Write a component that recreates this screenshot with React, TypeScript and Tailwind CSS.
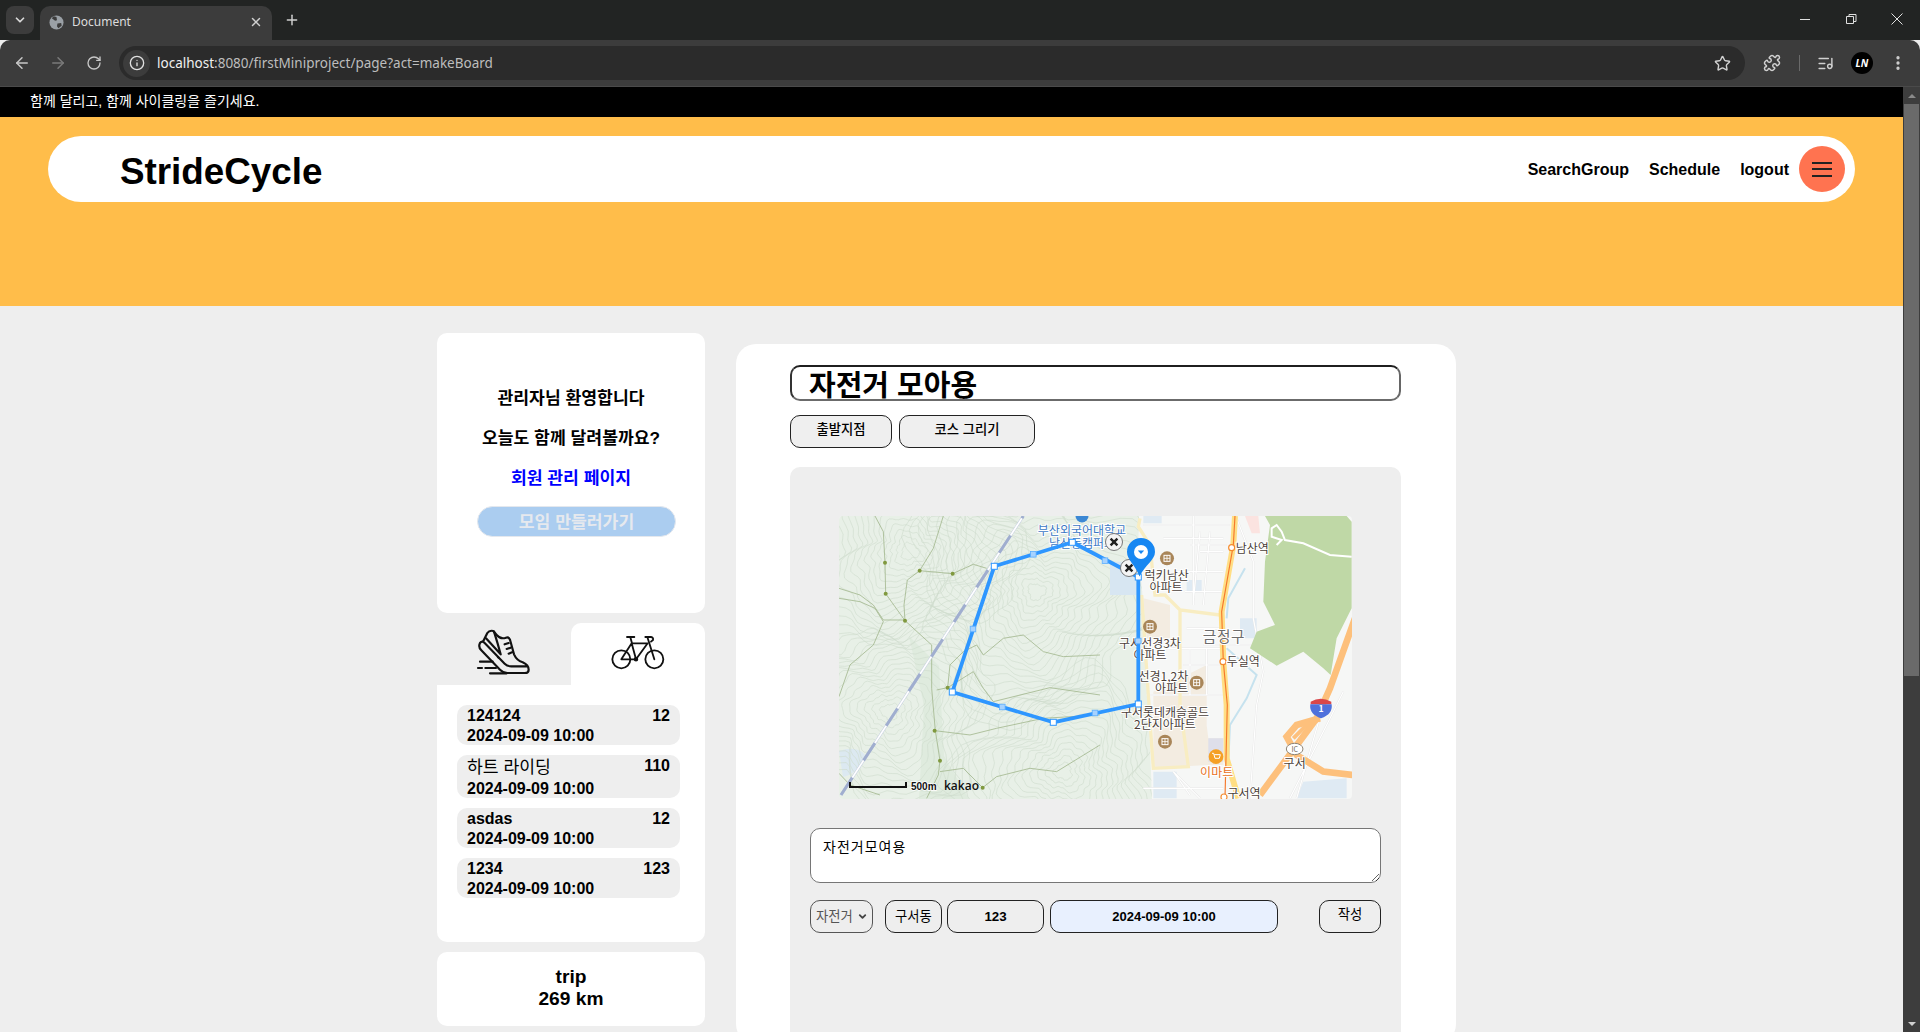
import { ArrowLeft, ArrowRight, ChevronDown, Info, ListMusic, MoreVertical, Plus, Puzzle, RotateCw, Star, X } from "lucide-react";

const sans = "font-['Liberation_Sans','Noto_Sans_CJK_KR',sans-serif]";

const boards = [
  { title: "124124", count: "12", date: "2024-09-09 10:00" },
  { title: "하트 라이딩", count: "110", date: "2024-09-09 10:00", kr: true },
  { title: "asdas", count: "12", date: "2024-09-09 10:00" },
  { title: "1234", count: "123", date: "2024-09-09 10:00" },
];

// contour rings for the terrain side of the map
function ring(cx: number, cy: number, r: number, seed: number) {
  const pts: string[] = [];
  for (let i = 0; i <= 90; i++) {
    const t = (i / 90) * Math.PI * 2;
    const k = 1 + 0.16 * Math.sin(3 * t + seed) + 0.08 * Math.sin(7 * t + seed * 2 + r / 40) + 0.035 * Math.sin(17 * t + r / 15);
    pts.push(`${(cx + Math.cos(t) * r * k * 1.1).toFixed(1)},${(cy + Math.sin(t) * r * k).toFixed(1)}`);
  }
  return `M${pts.join("L")}Z`;
}

const contourCenters = [
  { x: 240, y: 140, seed: 1, n: 16 },
  { x: 620, y: 260, seed: 2.4, n: 20 },
  { x: 180, y: 620, seed: 4, n: 16 },
  { x: 700, y: 800, seed: 5.2, n: 16 },
];

const trailDots = [
  [165, 173], [167, 266], [225, 347], [269, 197], [368, 206], [353, 548], [314, 677], [330, 767], [458, 848],
];

const routeCorners = [
  [113.3, 176], [155.3, 50.3], [233.3, 26.3], [299.3, 61], [299.3, 188], [214.3, 206.3],
];
const routeMids = [
  [134, 113], [194.3, 38.3], [266, 44.7], [299.3, 125], [256, 197], [163.3, 191],
];

const labels: [string, number, number][] = [
  ["럭키남산", 230, 224],
  ["아파트", 228, 260],
  ["남산역", 487, 143],
  ["구서선경3차", 180, 428],
  ["아파트", 180, 465],
  ["두실역", 460, 483],
  ["선경1,2차", 220, 528],
  ["아파트", 245, 563],
  ["구서롯데캐슬골드", 225, 635],
  ["2단지아파트", 225, 673],
  ["구서", 614, 788],
  ["구서역", 462, 878],
];

const townRoads =
  "M160 60H420M310 33V300M220 100H400M330 80L310 290M360 80L340 300M400 140H330M260 200H400M280 480H400M170 570H400M340 420H520M165 430H400M300 120H410M285 260H395M290 370H390M300 430V570M350 430V570M160 850H400";
const sideRoads = "M440 40L490 170V340L520 500L500 600L480 880M760 560L640 800L600 880M700 600L620 880M300 870L250 800L330 880";

function AptIcon({ x, y }: { x: number; y: number }) {
  return (
    <g>
      <circle cx={x} cy={y} r="21" fill="#A98659" />
      <rect x={x - 9} y={y - 9} width="18" height="18" fill="none" stroke="#fff" strokeWidth="3" />
      <path d={`M${x - 9} ${y}h18M${x} ${y - 9}v18`} stroke="#fff" strokeWidth="2.5" />
    </g>
  );
}

function CloseDot({ x, y }: { x: number; y: number }) {
  return (
    <g>
      <circle cx={x} cy={y} r="8.5" fill="#f4f4f4" stroke="#777" strokeWidth="1" />
      <path d={`M${x - 3.4} ${y - 3.4}L${x + 3.4} ${y + 3.4}M${x + 3.4} ${y - 3.4}L${x - 3.4} ${y + 3.4}`} stroke="#222" strokeWidth="2.4" />
    </g>
  );
}

function KakaoMap() {
  return (
    <svg viewBox="0 0 513 283" className="block w-[513px] h-[283px] rounded-[4px]" fontFamily="'Noto Sans CJK KR', sans-serif">
      <defs>
        <clipPath id="terrain">
          <path d="M0 0H300L299 40L306 100L310 200L313 283H0Z" />
        </clipPath>
      </defs>
      <rect width="513" height="283" fill="#F6F7F6" />
      <g clipPath="url(#terrain)">
        <rect width="320" height="283" fill="#E8F0E7" />
        <path d="M70 120L100 150L105 240L130 283H80L85 190Z" fill="#DFEBDE" />
        <path d="M0 235q18 -6 26 4q-8 20 -22 22z" fill="#DCE9F1" />
        <g transform="translate(-9,-11) scale(0.3333)" fill="none" stroke="#CEDBCD" strokeWidth="1.8">
          {contourCenters.map((c) =>
            Array.from({ length: c.n }, (_, i) => <path key={`${c.x}-${i}`} d={ring(c.x, c.y, 24 + i * 17, c.seed)} />)
          )}
        </g>
      </g>

      {/* trails, in the coordinates of the left half */}
      <g transform="translate(-9,-11) scale(0.3333)" fill="none" stroke="#A6BA92" strokeWidth="2.6">
        <path d="M135 33L160 80L165 173L167 266L225 347L305 420V550L316 677L330 767L325 810L290 880" />
        <path d="M27 250L90 270L130 300L160 345H225M27 280L90 290L135 310L160 350L130 420L60 480L27 575" />
        <path d="M225 347L222 300L232 225L269 197L368 206L430 178L470 190" />
        <path d="M340 33L310 130L269 197M353 548L320 555M353 548L430 500L460 550L490 590L660 548L810 570" />
        <path d="M353 548L360 480L400 440L440 420L460 450L520 400L580 390L640 440L700 455L810 450" />
        <path d="M314 677L420 690L500 670L640 640L810 630" />
        <path d="M330 800L400 790L458 848L500 815L600 790L680 800L810 720" />
        <path d="M27 805L60 840L150 870" />
      </g>
      <g transform="translate(-9,-11) scale(0.3333)" fill="#80993F">
        {trailDots.map(([x, y]) => (
          <circle key={`${x}-${y}`} cx={x} cy={y} r="6" />
        ))}
      </g>

      {/* railway */}
      <g transform="translate(-9,-11) scale(0.3333)" fill="none">
        <path d="M33 870L580 33" stroke="#C4CDE2" strokeWidth="8" />
        <path d="M33 870L580 33" stroke="#fff" strokeWidth="5" />
        <path d="M33 870L580 33" stroke="#A0AECF" strokeWidth="9" strokeDasharray="62 62" />
      </g>

      {/* right half: town, roads, mountain */}
      <g transform="translate(251,-11) scale(0.3333)">
        <path d="M60 170H140V270H60Z" fill="#D7E6F2" />
        <path d="M160 280L240 300V400H170ZM190 560L350 480V780L190 790ZM350 660V780H400V700H355Z" fill="#F3ECE1" />
        <path d="M355 700H400V770H355Z" fill="#DEDFEA" />
        <path d="M160 33H215V55H160ZM290 225H335V260H290ZM450 340H500V400H450ZM190 800H260V880H190ZM640 830L770 820V880H620Z" fill="#DFEAF3" />
        <path d="M465 33H505L510 85L485 85Z" fill="#FBE3E0" />
        <g fill="none" stroke="#E6E6E6" strokeWidth="6">
          <path d={townRoads} />
          <path d={sideRoads} />
        </g>
        <g fill="none" stroke="#fff" strokeWidth="3.500">
          <path d={townRoads} />
          <path d={sideRoads} />
        </g>
        <path d="M525 33H770L785 50V310L740 400L722 510L700 490L640 440L560 482L480 430L500 380L555 360L520 290L525 170L540 60Z" fill="#BFD8A6" />
        <path d="M785 155L720 150L640 115L585 105L575 80L560 60L545 70L545 95L575 105L560 120" fill="none" stroke="#fff" strokeWidth="6" />
        <g fill="none" stroke="#C6E2EE" strokeWidth="6">
          <path d="M465 190L415 280L410 340M410 430L500 510L470 580L420 660L415 770" />
        </g>
        <g fill="none" stroke="#F8EDC2" strokeWidth="10">
          <path d="M150 40L145 65L180 120L195 270L225 270L270 315L390 330M155 270L185 720L190 790L295 785L270 600V315" />
        </g>
        <g fill="none" stroke="#FDC07C" strokeWidth="20">
          <path d="M795 340L720 550L680 640L510 870" />
          <path d="M690 640L620 660L590 695L620 750L700 800L790 810" />
          <path d="M660 650L610 700" strokeWidth="12" />
        </g>
        <path d="M435 33L430 120L395 320L400 470L410 600L410 760L445 880" fill="none" stroke="#FFDE84" strokeWidth="18" />
        <path d="M435 33L430 120L395 320L400 470L412 600L405 880" fill="none" stroke="#F5792C" strokeWidth="3.5" />
        {[[425, 128], [399, 470], [402, 876]].map(([x, y]) => (
          <circle key={x} cx={x} cy={y} r="9" fill="#fff" stroke="#F58A2C" strokeWidth="3.5" />
        ))}
        <AptIcon x={231} y={160} />
        <AptIcon x={180} y={365} />
        <AptIcon x={320} y={533} />
        <AptIcon x={225} y={710} />
        <circle cx="378" cy="755" r="22" fill="#F5A024" />
        <path d="M366 745h5l4 15h13l3-11h-18" fill="none" stroke="#fff" strokeWidth="3" />
        <ellipse cx="614" cy="732" rx="25" ry="17" fill="#fff" stroke="#8D8373" strokeWidth="3" />
        <text x="614" y="740" fontSize="21" textAnchor="middle" fill="#6E6455">IC</text>
        <path d="M662 590q30 -18 62 0v8h-62z" fill="#D9474A" />
        <path d="M661 598h64q4 30 -32 42q-36 -12 -32 -42z" fill="#4F71DC" />
        <text x="693" y="622" fontSize="26" fontWeight="700" textAnchor="middle" fill="#fff">1</text>
        <g fontSize="36" textAnchor="middle" fill="#4B3F3A" stroke="#fff" strokeWidth="6" paintOrder="stroke">
          {labels.map(([t, x, y]) => (
            <text key={`${t}-${x}`} x={x} y={y}>{t}</text>
          ))}
          <text x="402" y="410" fontSize="44" fill="#6B6B6B" letterSpacing="2">금정구</text>
          <text x="380" y="817" fill="#E8701C">이마트</text>
        </g>
      </g>

      {/* labels over the left half */}
      <g fontSize="12" textAnchor="middle" fill="#3C78C4" stroke="#fff" strokeWidth="2" paintOrder="stroke">
        <text x="243" y="19">부산외국어대학교</text>
        <text x="243" y="32">남산동캠퍼스</text>
      </g>
      <circle cx="243" cy="0" r="6.5" fill="#3C88D4" />

      {/* drawn course */}
      <path
        d="M299.3 61L233.3 26.3L155.3 50.3L113.3 176L214.3 206.3L299.3 188V61"
        fill="none"
        stroke="#2E96FF"
        strokeWidth="3.8"
        strokeLinejoin="round"
      />
      {routeMids.map(([x, y]) => (
        <rect key={`${x}`} x={x - 2.8} y={y - 2.8} width="5.6" height="5.6" fill="#A6D2FF" stroke="#5BAEFF" strokeWidth="0.8" />
      ))}
      {routeCorners.map(([x, y]) => (
        <rect key={`${x}`} x={x - 3} y={y - 3} width="6" height="6" fill="#fff" stroke="#2E96FF" strokeWidth="1" />
      ))}
      <CloseDot x={275} y={26} />
      <CloseDot x={290} y={52} />
      <path d="M302 22a14 14 0 0 1 14 14c0 8 -10 13 -15.500 24.500c-4 -11.500 -12.500 -16.500 -12.500 -24.500a14 14 0 0 1 14 -14z" fill="#1787F2" />
      <circle cx="302" cy="36" r="7" fill="#fff" />
      <path d="M298.800 34.500h6.400l-3.200 3.500z" fill="#1787F2" />

      <path d="M11 266V271H67V266" fill="none" stroke="#111" strokeWidth="2" />
      <text x="72" y="274" fontSize="10" fontWeight="700" fontFamily="'Liberation Sans', sans-serif" fill="#111" stroke="#fff" strokeWidth="1.5" paintOrder="stroke">500m</text>
      <text x="105" y="274" fontSize="12" fontFamily="'Open Sans', sans-serif" fontWeight="600" fill="#111">kakao</text>
    </svg>
  );
}

function ShoeIcon() {
  return (
    <svg viewBox="0 0 210 180" className="w-[70px] h-[60px] -mt-[2px] ml-[2px]" fill="none" stroke="#111" strokeWidth="6.500" strokeLinecap="round" strokeLinejoin="round">
      <path d="M40 60L52 36Q58 27 70 30L80 42Q92 56 108 50Q116 47 120 56L132 100Q140 118 158 124Q176 132 176 146Q176 156 165 156H112Q100 156 90 146L34 88Q24 78 30 66Q36 58 44 66L104 128Q112 136 124 136H172" />
      <path d="M48 52L92 100M72 32Q84 70 92 100M104 70l12 -4M110 84l12 -4M116 98l10 -4M84 108l2 2" />
      <path d="M30 122H68M24 141H36M46 141H78M60 157H110" />
    </svg>
  );
}

function BikeIcon() {
  return (
    <svg viewBox="0 0 210 150" className="w-[70px] h-[50px] mr-[5px]" fill="none" stroke="#111" strokeWidth="5.500" strokeLinecap="round" strokeLinejoin="round">
      <circle cx="61" cy="100" r="27" />
      <circle cx="160" cy="100" r="27" />
      <path d="M61 100H105L140 52H92L105 100M92 52L61 100M88 34L93 52M78 33H100" />
      <path d="M133 33H150Q158 34 156 42L150 47M139 33L160 100" />
      <circle cx="105" cy="100" r="4" fill="#111" />
    </svg>
  );
}

function BrowserChrome() {
  return (
    <div className="shrink-0 font-['Noto_Sans',sans-serif]">
      <div className="h-10 bg-[#222423] flex items-end relative">
        <div className="absolute left-[6px] top-[6px] w-[28px] h-[28px] rounded-[8px] bg-[#3c3c3c] flex items-center justify-center">
          <ChevronDown size={14} strokeWidth={3} className="text-[#d8d8d8]" />
        </div>
        <div className="ml-[40px] w-[232px] h-[34px] bg-[#3c3c3c] rounded-t-[10px] flex items-center pl-[9px] pr-[9px] pb-[2px] text-[#dcdcdc]">
          <svg viewBox="0 0 16 16" className="w-[15px] h-[15px] mr-[8px] shrink-0">
            <circle cx="8" cy="8" r="7.500" fill="#9aa0a6" />
            <path d="M3 3.500L6.500 6L8.500 5.500L8 2L5 1.200ZM9 9L13 8.500L13.500 11.500L10 14L8.500 12Z" fill="#3c3c3c" />
          </svg>
          <span className="text-[12px] flex-1">Document</span>
          <X size={14} strokeWidth={2.5} className="text-[#d0d0d0]" />
        </div>
        <Plus size={16} strokeWidth={2.2} className="ml-[12px] mb-[12px] text-[#d0d0d0]" />
        <div className="ml-auto self-start flex items-center text-[#e0e0e0] h-[38px]">
          <svg viewBox="0 0 14 14" className="w-[46px] h-[14px]"><path d="M2 7.500H12" stroke="currentColor" /></svg>
          <svg viewBox="0 0 14 14" className="w-[46px] h-[14px]"><path d="M2.500 4.500h7v7h-7zM5 4.500V2.500h7v7h-2.500" fill="none" stroke="currentColor" /></svg>
          <svg viewBox="0 0 14 14" className="w-[46px] h-[14px]"><path d="M1.500 1.500L12.500 12.500M12.500 1.500L1.500 12.500" stroke="currentColor" /></svg>
        </div>
      </div>
      <div className="h-[47px] bg-[#3c3c3c] border-b border-[#4a4a4a] rounded-tl-[10px] rounded-tr-[10px] flex items-center pl-[13px] text-[#c8c8c8]">
        <ArrowLeft size={18} strokeWidth={2} />
        <ArrowRight size={18} strokeWidth={2} className="ml-[18px] text-[#7a7a7a]" />
        <RotateCw size={16} strokeWidth={2} className="ml-[19px]" />
        <div className="ml-[17px] h-[34px] w-[1626px] bg-[#2b2b2b] rounded-full flex items-center pl-[4px] pr-[14px]">
          <div className="w-[27px] h-[27px] rounded-full bg-[#3c3c3c] flex items-center justify-center">
            <Info size={16} strokeWidth={2} className="text-[#e0e0e0]" />
          </div>
          <span className="ml-[7px] text-[13.500px] text-[#bdbdbd] flex-1">
            <span className="text-[#f0f0f0]">localhost</span>:8080/firstMiniproject/page?act=makeBoard
          </span>
          <Star size={17} strokeWidth={2} className="text-[#d0d0d0]" />
        </div>
        <Puzzle size={18} strokeWidth={2} className="ml-[18px] text-[#d0d0d0]" />
        <div className="ml-[18px] w-px h-[16px] bg-[#6a6a6a]" />
        <ListMusic size={17} strokeWidth={2} className="ml-[17px] text-[#d0d0d0]" />
        <div className="ml-[17px] w-[22px] h-[22px] rounded-full bg-black text-white text-[10px] font-bold italic flex items-center justify-center">LN</div>
        <MoreVertical size={18} strokeWidth={2.4} className="ml-[16px] text-[#d0d0d0]" />
      </div>
    </div>
  );
}

export default function App() {
  return (
    <div className={`h-[1032px] w-[1920px] overflow-hidden flex flex-col bg-[#eeeeee] text-black ${sans}`}>
      <BrowserChrome />
      <div className="flex flex-1 min-h-0">
        <div className="w-[1903px] overflow-hidden">
          <div className="h-[30px] bg-black text-white text-[14px] pl-[30px] leading-[29px]">함께 달리고, 함께 사이클링을 즐기세요.</div>
          <header className="h-[189px] bg-[#FFBD4A] pt-[19px] px-[48px]">
            <div className="h-[66px] bg-white rounded-full flex items-center pl-[72px] pr-[10px]">
              <h1 className="text-[36.800px] font-bold leading-none mt-[6px] flex-1">StrideCycle</h1>
              <nav className="flex items-center gap-[20px] text-[16px] font-bold mt-[2px]">
                <a>SearchGroup</a>
                <a>Schedule</a>
                <a>logout</a>
              </nav>
              <button className="ml-[10px] w-[46px] h-[46px] rounded-full bg-[#FF7350] flex flex-col items-center justify-center gap-[4.500px]">
                <span className="w-[20px] h-[2px] bg-[#222]" />
                <span className="w-[20px] h-[2px] bg-[#222]" />
                <span className="w-[20px] h-[2px] bg-[#222]" />
              </button>
            </div>
          </header>

          <div className="flex pl-[437px] pt-[27px] gap-[31px]">
            <aside className="w-[268px] shrink-0">
              <div className="h-[280px] bg-white rounded-[10px] pt-[53px] flex flex-col items-center text-[17.200px] font-bold leading-[24px] gap-[16px]">
                <p>관리자님 환영합니다</p>
                <p>오늘도 함께 달려볼까요?</p>
                <a className="text-[#0000ff]">회원 관리 페이지</a>
                <button className="ml-[11px] w-[199px] h-[31px] rounded-full bg-[#ABCDF0] border border-[#e4e8ee] text-[#e6e9ee] text-[17.200px] font-bold">모임 만들러가기</button>
              </div>
              <div className="mt-[10px] flex h-[62px]">
                <div className="w-[134px] flex items-start justify-center"><ShoeIcon /></div>
                <div className="w-[134px] bg-white rounded-t-[10px] flex items-start justify-center pt-[3px]"><BikeIcon /></div>
              </div>
              <div className="h-[257px] bg-white rounded-b-[10px] pt-[20px] pl-[20px] pr-[25px] flex flex-col gap-[10px]">
                {boards.map((b) => (
                  <div key={b.title} className={`bg-[#eeeeee] rounded-[10px] px-[10px] pt-px text-[16px] font-bold leading-[20px] ${b.kr ? "h-[43px]" : "h-[40px]"}`}>
                    <div className={`flex justify-between ${b.kr ? "leading-[23px]" : ""}`}>
                      <span className={b.kr ? "font-normal text-[17.200px]" : ""}>{b.title}</span>
                      <span className={b.kr ? "leading-[20px]" : ""}>{b.count}</span>
                    </div>
                    <div>{b.date}</div>
                  </div>
                ))}
              </div>
              <div className="mt-[10px] h-[74px] bg-white rounded-[10px] pb-[3px] flex flex-col items-center justify-center text-[19.200px] font-bold leading-[22px]">
                <span>trip</span>
                <span>269 km</span>
              </div>
            </aside>

            <main className="w-[720px] h-[700px] mt-[11px] bg-white rounded-[20px] pl-[54px] pr-[55px] pt-[21px]">
              <input
                readOnly
                value="자전거 모아용"
                className="block w-full h-[36px] border-2 border-t-[#1f1f1f] border-l-[#333] border-r-[#666] border-b-[#6b6b6b] rounded-[10px] pl-[17px] text-[29px] font-bold leading-none outline-none"
              />
              <div className="mt-[14px] flex gap-[7px]">
                <button className="w-[102px] h-[33px] bg-[#efefef] border border-[#222] rounded-[10px] text-[13.330px] font-medium pb-[3px]">출발지점</button>
                <button className="w-[136px] h-[33px] bg-[#efefef] border border-[#222] rounded-[10px] text-[13.330px] font-medium pb-[3px]">코스 그리기</button>
              </div>
              <div className="mt-[19px] h-[600px] bg-[#eeeeee] rounded-[10px] pt-[49px]">
                <div className="ml-[49px]"><KakaoMap /></div>
                <div className="pl-[20px] pr-[20px]">
                  <textarea
                    readOnly
                    value="자전거모여용"
                    className="mt-[29px] block w-full h-[55px] bg-white border border-[#767676] rounded-[10px] px-[12px] py-[9px] text-[14px] tracking-[1px] leading-[18px] outline-none"
                  />
                  <div className="mt-[17px] flex h-[33px] text-[13.330px] font-bold">
                    <div className="relative w-[63px] border border-[#555] rounded-[10px] flex items-center pl-[5px] font-normal text-[#555]">
                      자전거
                      <ChevronDown size={11} strokeWidth={4} className="ml-[4px] text-[#444]" />
                    </div>
                    <button className="ml-[12px] w-[57px] border border-[#222] rounded-[10px] font-normal">구서동</button>
                    <input readOnly value="123" className="ml-[5px] w-[97px] border border-[#222] rounded-[10px] text-center outline-none" />
                    <input readOnly value="2024-09-09 10:00" className="ml-[6px] w-[228px] border border-[#222] rounded-[10px] text-center text-[13px] bg-[#E8F0FE] outline-none" />
                    <button className="ml-auto w-[62px] border border-[#222] rounded-[10px] font-normal pb-[3px]">작성</button>
                  </div>
                </div>
              </div>
            </main>
          </div>
        </div>

        <div className="w-[17px] bg-[#3d3d3d] flex flex-col items-center">
          <div className="h-[17px] flex items-center justify-center">
            <span className="w-0 h-0 border-x-[4px] border-x-transparent border-b-[4px] border-b-[#8a8a8a]" />
          </div>
          <div className="w-[15px] h-[572px] bg-[#6a6a6a]" />
          <div className="mt-auto h-[17px] flex items-center justify-center">
            <span className="w-0 h-0 border-x-[4px] border-x-transparent border-t-[4px] border-t-[#d0d0d0]" />
          </div>
        </div>
      </div>
    </div>
  );
}
